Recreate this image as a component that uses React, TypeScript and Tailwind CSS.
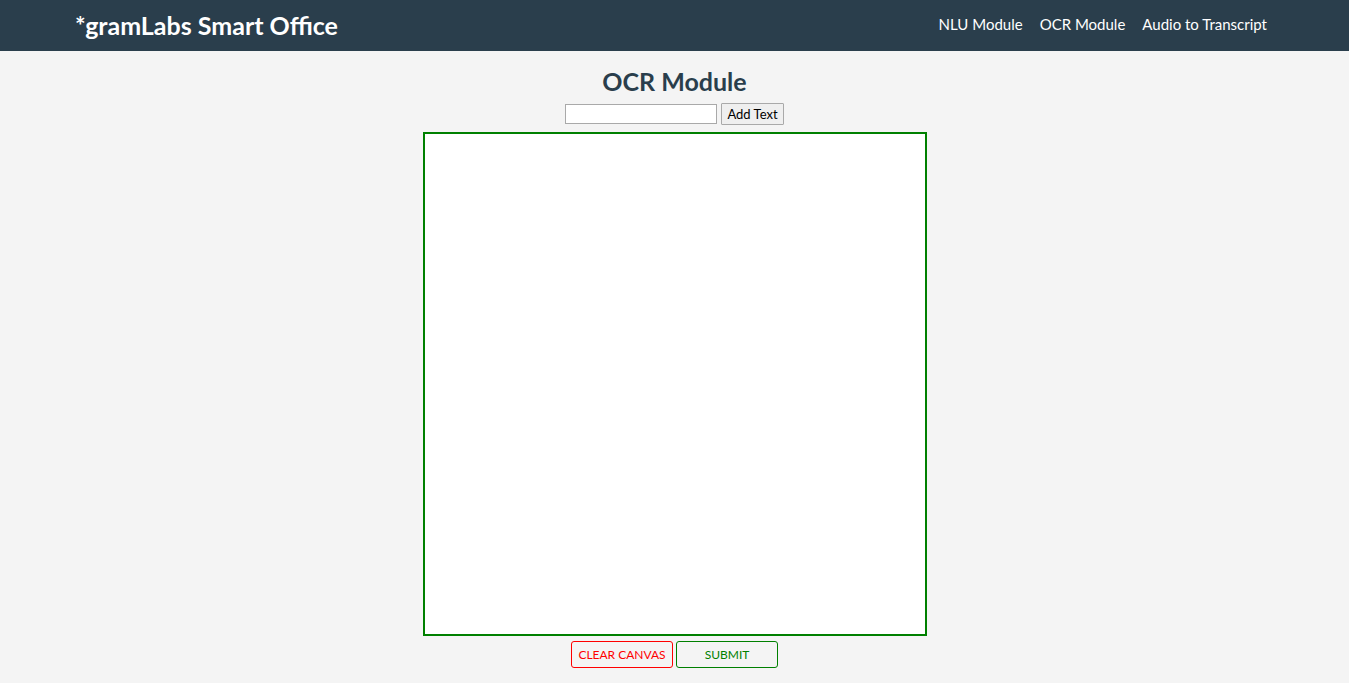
export default function App() {
  return (
    <div className="min-h-screen bg-[#f4f4f4] font-['Lato',sans-serif]">
      <nav className="h-[51px] bg-[#2a3e4c] flex items-center justify-between pl-[75px] pr-[82px]">
        <a className="text-white text-[25px] font-bold leading-none">*gramLabs Smart Office</a>
        <ul className="flex gap-[17px] text-white text-[15px] -mt-[3px]">
          <li>NLU Module</li>
          <li>OCR Module</li>
          <li>Audio to Transcript</li>
        </ul>
      </nav>
      <div className="flex flex-col items-center">
        <h1 className="mt-[14px] text-[25px] font-bold text-[#2a3e4c] leading-[32px]">OCR Module</h1>
        <div className="flex items-center gap-[4px] mt-[6px]">
          <input type="text" className="w-[152px] h-[20px] bg-white border border-[#a9a9a9] outline-none" />
          <button className="h-[22px] px-[5px] bg-[#efefef] border border-[#a9a9a9] text-[13px] text-black leading-none rounded-[1px]">Add Text</button>
        </div>
        <div className="mt-[7px] w-[504px] h-[504px] bg-white border-2 border-[#008000]"></div>
        <div className="flex gap-[3px] mt-[5px]">
          <button className="w-[102px] h-[27px] border border-[#ff0000] text-[#ff0000] text-[12px] rounded-[3px]">CLEAR CANVAS</button>
          <button className="w-[102px] h-[27px] border border-[#008000] text-[#008000] text-[12px] rounded-[3px]">SUBMIT</button>
        </div>
      </div>
    </div>
  );
}
